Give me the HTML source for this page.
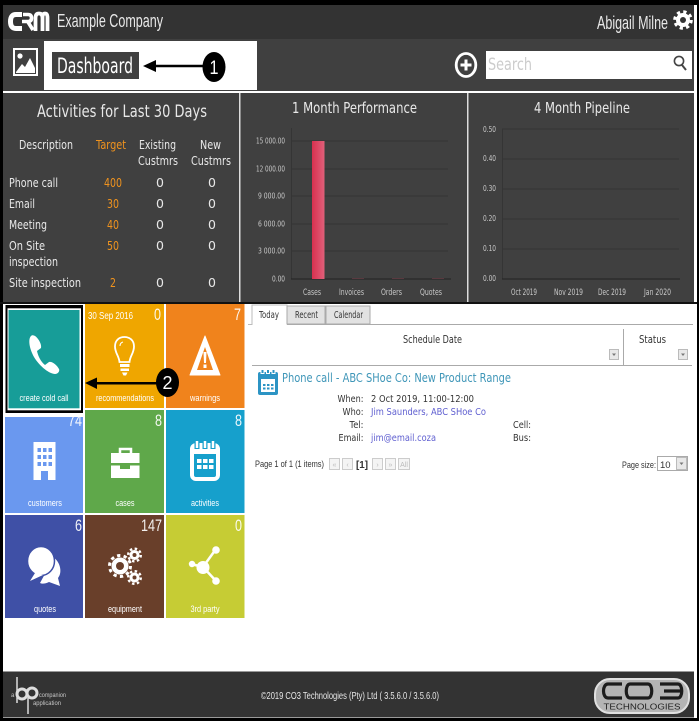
<!DOCTYPE html>
<html><head><meta charset="utf-8"><title>Dashboard</title>
<style>
html,body{margin:0;padding:0;background:#fff;width:699px;height:723px;overflow:hidden}
svg{display:block}
text{font-family:"Liberation Sans",sans-serif;fill:#fff}
.d{font-family:"DejaVu Sans",sans-serif}
.m{text-anchor:middle}
.e{text-anchor:end}
.a{fill:#e8e8e8}
.g{fill:#c8c8c8}
.o{fill:#f0931e}
.k{fill:#333}
.l{fill:#5f5fd0}
</style></head><body>
<svg width="699" height="723" viewBox="0 0 699 723" xmlns="http://www.w3.org/2000/svg">
<rect width="699" height="723" fill="#fff"/>
<!-- outer frame -->
<rect x="0" y="0" width="699" height="5" fill="#000"/>
<rect x="0" y="0" width="3" height="721" fill="#000"/>
<rect x="697" y="0" width="2" height="721" fill="#000"/>
<rect x="0" y="718" width="699" height="3" fill="#000"/>
<rect x="3" y="5" width="691" height="34" fill="#333"/>
<rect x="3" y="39" width="691" height="52" fill="#404040"/>
<rect x="3" y="93" width="691" height="209" fill="#404040"/>
<rect x="0" y="302" width="697" height="2" fill="#111"/>
<rect x="3" y="91" width="691" height="2" fill="#fff"/>
<rect x="239" y="93" width="1.5" height="209" fill="#ddd"/>
<rect x="467" y="93" width="1.5" height="209" fill="#ddd"/>

<!-- CRM logo -->
<g fill="none" stroke="#fff" stroke-linecap="butt">
<path d="M22 14.500H16Q10.500 14.500 10.500 21.500Q10.500 28.500 16 28.500H22" stroke-width="5"/>
<path d="M22 21.500H28Q31.500 21.500 31.500 18Q31.500 14.500 28 14.500H23M28 22L33 30" stroke-width="3.600"/>
<path d="M35.500 31V18Q35.500 13.500 39 13.500Q42.500 13.500 42.500 18V31M42.500 18Q42.500 13.500 45 13.500Q47.500 13.500 47.500 18V31" stroke-width="3.800"/>
</g>
<text x="57" y="27" font-size="18" class="a" textLength="106" lengthAdjust="spacingAndGlyphs">Example Company</text>
<text x="597" y="29" font-size="18" class="a" textLength="71" lengthAdjust="spacingAndGlyphs">Abigail Milne</text>
<!-- gear -->
<circle cx="683" cy="20" r="7" fill="#fff"/>
<circle cx="683" cy="20" r="8.300" fill="none" stroke="#fff" stroke-width="3" stroke-dasharray="3.260 3.260"/>
<circle cx="683" cy="20" r="3" fill="#333"/>

<!-- second row -->
<rect x="44" y="41" width="213" height="49" fill="#fff"/>
<rect x="14" y="49" width="23" height="26" fill="none" stroke="#fff" stroke-width="2"/>
<circle cx="20" cy="56" r="2.600" fill="#fff"/>
<path d="M16 72L22 64 25 67 30 58 35 68V73H16Z" fill="#fff"/>
<rect x="52" y="52" width="87" height="27" fill="#404040"/>
<text x="57" y="73" font-size="21" class="d" textLength="76" lengthAdjust="spacingAndGlyphs">Dashboard</text>
<path d="M143 66L156 60V64.800H204V67.200H156V72Z" fill="#000"/>
<ellipse cx="214" cy="67" rx="11.500" ry="15" fill="#000"/>
<text x="214" y="74" font-size="19" class="m" textLength="9" lengthAdjust="spacingAndGlyphs">1</text>
<ellipse cx="466" cy="65" rx="9.800" ry="11.500" fill="none" stroke="#fff" stroke-width="2.800"/>
<path d="M466 59.500V70.500M460.500 65H471.500" stroke="#fff" stroke-width="3"/>
<rect x="486" y="51" width="206" height="28" fill="#fff"/>
<text x="488" y="70" font-size="17" style="fill:#ccc" class="d" textLength="44" lengthAdjust="spacingAndGlyphs">Search</text>
<circle cx="679" cy="61" r="4.600" fill="none" stroke="#444" stroke-width="1.600"/>
<path d="M682 65L686 70" stroke="#444" stroke-width="2"/>

<!-- activities -->
<text x="37" y="117" font-size="17" class="d a" textLength="170" lengthAdjust="spacingAndGlyphs">Activities for Last 30 Days</text>
<g font-size="12.500">
<text x="19" y="149" class="d a" textLength="54" lengthAdjust="spacingAndGlyphs">Description</text>
<text x="96" y="149" class="d o" textLength="30" lengthAdjust="spacingAndGlyphs">Target</text>
<text x="139" y="149" class="d a" textLength="37" lengthAdjust="spacingAndGlyphs">Existing</text>
<text x="138" y="165" class="d a" textLength="40" lengthAdjust="spacingAndGlyphs">Custmrs</text>
<text x="200" y="149" class="d a" textLength="21" lengthAdjust="spacingAndGlyphs">New</text>
<text x="191" y="165" class="d a" textLength="40" lengthAdjust="spacingAndGlyphs">Custmrs</text>
<text x="9" y="187" class="d a" textLength="49" lengthAdjust="spacingAndGlyphs">Phone call</text>
<text x="9" y="208" class="d a" textLength="26" lengthAdjust="spacingAndGlyphs">Email</text>
<text x="9" y="229" class="d a" textLength="38" lengthAdjust="spacingAndGlyphs">Meeting</text>
<text x="9" y="250" class="d a" textLength="36" lengthAdjust="spacingAndGlyphs">On Site</text>
<text x="9" y="266" class="d a" textLength="49" lengthAdjust="spacingAndGlyphs">inspection</text>
<text x="9" y="287" class="d a" textLength="72" lengthAdjust="spacingAndGlyphs">Site inspection</text>
<text x="104" y="187" class="d o" textLength="18" lengthAdjust="spacingAndGlyphs">400</text>
<text x="107" y="208" class="d o" textLength="12" lengthAdjust="spacingAndGlyphs">30</text>
<text x="107" y="229" class="d o" textLength="12" lengthAdjust="spacingAndGlyphs">40</text>
<text x="107" y="250" class="d o" textLength="12" lengthAdjust="spacingAndGlyphs">50</text>
<text x="110" y="287" class="d o" textLength="6" lengthAdjust="spacingAndGlyphs">2</text>
<text x="160" y="187" class="d a m">0</text><text x="160" y="208" class="d a m">0</text><text x="160" y="229" class="d a m">0</text><text x="160" y="250" class="d a m">0</text><text x="160" y="287" class="d a m">0</text>
<text x="212" y="187" class="d a m">0</text><text x="212" y="208" class="d a m">0</text><text x="212" y="229" class="d a m">0</text><text x="212" y="250" class="d a m">0</text><text x="212" y="287" class="d a m">0</text>
</g>

<!-- chart 1 -->
<text x="292" y="113" font-size="15" class="d a" textLength="125" lengthAdjust="spacingAndGlyphs">1 Month Performance</text>
<g stroke="#353535" stroke-width="1">
<path d="M291.500 128V279M291 141H448M291 169H448M291 196H448M291 224H448M291 251H448"/>
<path d="M291 279H451" stroke="#222"/>
</g>
<defs><linearGradient id="b" x1="0" x2="1" y1="0" y2="0"><stop offset="0" stop-color="#d9304f"/><stop offset="1" stop-color="#e0607a"/></linearGradient></defs>
<rect x="312" y="141" width="12.500" height="138" fill="url(#b)"/>
<rect x="352" y="278" width="12" height="1" fill="#5a3a40"/><rect x="392" y="278" width="12" height="1" fill="#5a3a40"/><rect x="432" y="278" width="12" height="1" fill="#5a3a40"/>
<g font-size="7.500">
<text x="285" y="143.500" class="e d g" textLength="29" lengthAdjust="spacingAndGlyphs">15 000.00</text>
<text x="285" y="171.500" class="e d g" textLength="29" lengthAdjust="spacingAndGlyphs">12 000.00</text>
<text x="285" y="198.500" class="e d g" textLength="27" lengthAdjust="spacingAndGlyphs">9 000.00</text>
<text x="285" y="226.500" class="e d g" textLength="27" lengthAdjust="spacingAndGlyphs">6 000.00</text>
<text x="285" y="253.500" class="e d g" textLength="27" lengthAdjust="spacingAndGlyphs">3 000.00</text>
<text x="285" y="281.500" class="e d g" textLength="13" lengthAdjust="spacingAndGlyphs">0.00</text>
</g>
<g font-size="8.500">
<text x="303" y="295" class="d g" textLength="18" lengthAdjust="spacingAndGlyphs">Cases</text>
<text x="339" y="295" class="d g" textLength="25" lengthAdjust="spacingAndGlyphs">Invoices</text>
<text x="381" y="295" class="d g" textLength="21" lengthAdjust="spacingAndGlyphs">Orders</text>
<text x="420" y="295" class="d g" textLength="22" lengthAdjust="spacingAndGlyphs">Quotes</text>
</g>

<!-- chart 2 -->
<text x="534" y="113" font-size="15" class="d a" textLength="96" lengthAdjust="spacingAndGlyphs">4 Month Pipeline</text>
<g stroke="#353535" stroke-width="1">
<path d="M502.500 129V279M502 129H679M502 159H679M502 189H679M502 219H679M502 249H679"/>
<path d="M502 279H680" stroke="#222"/>
</g>
<g font-size="7.500">
<text x="496" y="132" class="e d g" textLength="13" lengthAdjust="spacingAndGlyphs">0.50</text>
<text x="496" y="161" class="e d g" textLength="13" lengthAdjust="spacingAndGlyphs">0.40</text>
<text x="496" y="191" class="e d g" textLength="13" lengthAdjust="spacingAndGlyphs">0.30</text>
<text x="496" y="221" class="e d g" textLength="13" lengthAdjust="spacingAndGlyphs">0.20</text>
<text x="496" y="251" class="e d g" textLength="13" lengthAdjust="spacingAndGlyphs">0.10</text>
<text x="496" y="281" class="e d g" textLength="13" lengthAdjust="spacingAndGlyphs">0.00</text>
</g>
<g font-size="8.500">
<text x="511" y="295" class="d g" textLength="26" lengthAdjust="spacingAndGlyphs">Oct 2019</text>
<text x="554" y="295" class="d g" textLength="29" lengthAdjust="spacingAndGlyphs">Nov 2019</text>
<text x="598" y="295" class="d g" textLength="28" lengthAdjust="spacingAndGlyphs">Dec 2019</text>
<text x="644" y="295" class="d g" textLength="27" lengthAdjust="spacingAndGlyphs">Jan 2020</text>
</g>

<!-- tiles -->
<rect x="85" y="304" width="79" height="104" fill="#efa600"/>
<rect x="166" y="304" width="78.500" height="104" fill="#f0831c"/>
<rect x="5" y="410" width="78" height="103" fill="#6a98ef"/>
<rect x="85" y="410" width="79" height="103" fill="#5fa84a"/>
<rect x="166" y="410" width="78.500" height="103" fill="#16a0cc"/>
<rect x="5" y="515" width="78" height="103" fill="#3f50a6"/>
<rect x="85" y="515" width="79" height="103" fill="#693f2a"/>
<rect x="166" y="515" width="78.500" height="103" fill="#c6cc34"/>
<rect x="4" y="304" width="80" height="113" fill="#fff"/>
<rect x="5.500" y="305" width="77.500" height="108" fill="#000"/>
<rect x="7.500" y="308.300" width="73.500" height="102" fill="#fff"/>
<rect x="8.500" y="310" width="71" height="98.300" fill="#179d98"/>

<!-- tile text -->
<g font-size="9.500" class="m">
<text x="44" y="401" class="m" textLength="49" lengthAdjust="spacingAndGlyphs">create cold call</text>
<text x="125" y="401" class="m" textLength="58" lengthAdjust="spacingAndGlyphs">recommendations</text>
<text x="205" y="401" class="m" textLength="30" lengthAdjust="spacingAndGlyphs">warnings</text>
<text x="45" y="506" class="m" textLength="34" lengthAdjust="spacingAndGlyphs">customers</text>
<text x="125" y="506" class="m" textLength="19" lengthAdjust="spacingAndGlyphs">cases</text>
<text x="205" y="506" class="m" textLength="28" lengthAdjust="spacingAndGlyphs">activities</text>
<text x="45" y="612" class="m" textLength="22" lengthAdjust="spacingAndGlyphs">quotes</text>
<text x="125" y="612" class="m" textLength="34" lengthAdjust="spacingAndGlyphs">equipment</text>
<text x="205" y="612" class="m" textLength="29" lengthAdjust="spacingAndGlyphs">3rd party</text>
</g>
<text x="88" y="319" font-size="10.500" textLength="45" lengthAdjust="spacingAndGlyphs">30 Sep 2016</text>
<g font-size="17" opacity=".92">
<text x="161" y="320" class="e" textLength="7" lengthAdjust="spacingAndGlyphs">0</text>
<text x="241" y="320" class="e" textLength="7" lengthAdjust="spacingAndGlyphs">7</text>
<text x="82" y="426" class="e" textLength="14" lengthAdjust="spacingAndGlyphs">74</text>
<text x="162" y="426" class="e" textLength="7" lengthAdjust="spacingAndGlyphs">8</text>
<text x="242" y="426" class="e" textLength="7" lengthAdjust="spacingAndGlyphs">8</text>
<text x="82" y="531" class="e" textLength="7" lengthAdjust="spacingAndGlyphs">6</text>
<text x="162" y="531" class="e" textLength="21" lengthAdjust="spacingAndGlyphs">147</text>
<text x="242" y="531" class="e" textLength="7" lengthAdjust="spacingAndGlyphs">0</text>
</g>

<!-- icons -->
<path d="M31 336C28 339 29 348 34 357 40 367 50 374 55 374 58 374 60 371 59 369 57 365 52 361 49 362L45 365C41 362 38 356 37 351L41 348C42 344 38 338 35 336 33 335 32 335 31 336Z" fill="#fff"/>
<g fill="none" stroke="#fff" stroke-width="1.800">
<path d="M119.500 362C119 356 115 353 115 346.500 115 340 119.500 337 124.500 337S134 340 134 346.500C134 353 130 356 129.500 362Z"/>
<path d="M123 342C121 342.500 120 344 120 346" stroke-width="1"/>
</g>
<path d="M120 364H129.500V367H120ZM120.500 368.500H129V371H120.500ZM122 372.500H127.500L126 375.500H123.500Z" fill="#fff"/>
<path d="M205 336L220 375H190Z" fill="#fff" stroke="#fff" stroke-linejoin="round"/>
<path d="M205 347L213 370H197Z" fill="#f0831c"/>
<path d="M203.500 352H206.500L206 363H204Z" fill="#fff"/><rect x="203.500" y="364.500" width="3" height="3.500" fill="#fff"/>
<!-- building -->
<path d="M33.500 442H55.500V480H48V471H41V480H33.500Z" fill="#fff"/>
<g fill="#6a98ef"><rect x="37.500" y="448" width="3.500" height="4"/><rect x="43" y="448" width="3.500" height="4"/><rect x="48.500" y="448" width="3.500" height="4"/><rect x="37.500" y="455" width="3.500" height="4"/><rect x="43" y="455" width="3.500" height="4"/><rect x="48.500" y="455" width="3.500" height="4"/><rect x="37.500" y="462" width="3.500" height="4"/><rect x="43" y="462" width="3.500" height="4"/><rect x="48.500" y="462" width="3.500" height="4"/></g>
<!-- briefcase -->
<path d="M120 453V449H131V453" fill="none" stroke="#fff" stroke-width="2.500"/>
<path d="M111 453H139.500V463H111Z" fill="#fff"/>
<path d="M111 465.500H120V469H130V465.500H139.500V478H111Z" fill="#fff"/>
<!-- calendar -->
<rect x="192" y="445" width="26" height="34" rx="4" fill="none" stroke="#fff" stroke-width="4"/>
<rect x="192" y="445" width="26" height="9" fill="#fff"/>
<path d="M197 442V449M205 442V449M213 442V449" stroke="#16a0cc" stroke-width="5"/>
<path d="M197 441V448M205 441V448M213 441V448" stroke="#fff" stroke-width="2.500"/>
<g fill="#fff"><rect x="197" y="459" width="4.500" height="4"/><rect x="203" y="459" width="4.500" height="4"/><rect x="209" y="459" width="4.500" height="4"/><rect x="197" y="465" width="4.500" height="4"/><rect x="203" y="465" width="4.500" height="4"/><rect x="209" y="465" width="4.500" height="4"/></g>
<!-- quotes -->
<path d="M51 556C60 560 63 572 58 578L60 586 49 582C45 584 42 584 40 583L46 572Z" fill="#fff"/>
<ellipse cx="41" cy="561" rx="13.500" ry="14.500" fill="#fff" stroke="#3f50a6" stroke-width="1.500"/>
<path d="M35 573L30 581 43 575Z" fill="#fff"/>
<!-- gears -->
<g fill="#fff" stroke="none">
<circle cx="120" cy="566" r="8.500"/>
<circle cx="120" cy="566" r="10.500" fill="none" stroke="#fff" stroke-width="3" stroke-dasharray="3.300 3.300"/>
<circle cx="134.500" cy="555" r="5"/>
<circle cx="134.500" cy="555" r="6.300" fill="none" stroke="#fff" stroke-width="2.400" stroke-dasharray="2.470 2.470"/>
<circle cx="134.500" cy="577.500" r="5"/>
<circle cx="134.500" cy="577.500" r="6.300" fill="none" stroke="#fff" stroke-width="2.400" stroke-dasharray="2.470 2.470"/>
</g>
<circle cx="120" cy="566" r="4" fill="#693f2a"/><circle cx="134.500" cy="555" r="2" fill="#693f2a"/><circle cx="134.500" cy="577.500" r="2" fill="#693f2a"/>
<!-- share -->
<path d="M203 567L216 549M203 567L216 581M203 567L191 564" stroke="#fff" stroke-width="2.500"/>
<circle cx="203" cy="567.500" r="6.500" fill="#fff"/><circle cx="216" cy="550" r="3.800" fill="#fff"/><circle cx="216" cy="581" r="3.800" fill="#fff"/><circle cx="192" cy="564" r="3.200" fill="#fff"/>

<!-- annotation 2 -->
<path d="M85 383L97 377.500V382H158V384.500H97V389Z" fill="#000"/>
<ellipse cx="167.500" cy="382.500" rx="11.500" ry="14.500" fill="#000"/>
<text x="167.500" y="389" font-size="18" class="m" textLength="10" lengthAdjust="spacingAndGlyphs">2</text>

<!-- tabs -->
<path d="M248 324.500H252V305H287V324.500" fill="#fff" stroke="#bbb"/>
<rect x="287" y="306" width="38" height="18" fill="#e2e2e2" stroke="#aaa"/>
<rect x="326" y="306" width="44" height="18" fill="#e2e2e2" stroke="#aaa"/>
<path d="M287 324.500H693" stroke="#aaa"/>
<text x="259" y="318" font-size="9.500" class="d k" textLength="20" lengthAdjust="spacingAndGlyphs">Today</text>
<text x="295" y="318" font-size="9.500" class="d k" textLength="23" lengthAdjust="spacingAndGlyphs">Recent</text>
<text x="334" y="318" font-size="9.500" class="d k" textLength="29" lengthAdjust="spacingAndGlyphs">Calendar</text>
<path d="M252 365.500H692" stroke="#aaa"/>
<path d="M623.500 329V365" stroke="#aaa"/>
<text x="403" y="343" font-size="11" class="d k" textLength="59" lengthAdjust="spacingAndGlyphs">Schedule Date</text>
<text x="639" y="343" font-size="11" class="d k" textLength="27" lengthAdjust="spacingAndGlyphs">Status</text>
<rect x="609.500" y="349.500" width="9" height="10" fill="#e8e8e8" stroke="#bbb"/>
<rect x="678.500" y="349.500" width="9" height="10" fill="#e8e8e8" stroke="#bbb"/>
<path d="M612 353.500h4l-2 2.500zM681 353.500h4l-2 2.500z" fill="#777"/>
<!-- list icon -->
<rect x="258" y="372" width="20" height="23" rx="2" fill="#2c94c4"/>
<rect x="261" y="379" width="14" height="13" fill="#fff"/>
<path d="M262.500 369V374M268 369V374M273.500 369V374" stroke="#fff" stroke-width="4"/>
<path d="M262.500 370V373M268 370V373M273.500 370V373" stroke="#2c94c4" stroke-width="2"/>
<g fill="#2c94c4"><rect x="263" y="384" width="2.500" height="2"/><rect x="267" y="384" width="2.500" height="2"/><rect x="271" y="384" width="2.500" height="2"/><rect x="263" y="387.500" width="2.500" height="2"/><rect x="267" y="387.500" width="2.500" height="2"/><rect x="271" y="387.500" width="2.500" height="2"/></g>
<text x="282" y="382" font-size="12" class="d" style="fill:#3f96b8" textLength="229" lengthAdjust="spacingAndGlyphs">Phone call - ABC SHoe Co: New Product Range</text>
<g font-size="10">
<text x="363.500" y="402" class="e d k" textLength="26" lengthAdjust="spacingAndGlyphs">When:</text>
<text x="363.500" y="415" class="e d k" textLength="21" lengthAdjust="spacingAndGlyphs">Who:</text>
<text x="363.500" y="428" class="e d k" textLength="14" lengthAdjust="spacingAndGlyphs">Tel:</text>
<text x="363.500" y="441" class="e d k" textLength="25" lengthAdjust="spacingAndGlyphs">Email:</text>
<text x="371" y="402" class="d k" textLength="103" lengthAdjust="spacingAndGlyphs">2 Oct 2019, 11:00-12:00</text>
<text x="371" y="415" class="d l" textLength="115" lengthAdjust="spacingAndGlyphs">Jim Saunders, ABC SHoe Co</text>
<text x="371" y="441" class="d l" textLength="65" lengthAdjust="spacingAndGlyphs">jim@email.coza</text>
<text x="513" y="428" class="d k" textLength="18" lengthAdjust="spacingAndGlyphs">Cell:</text>
<text x="513" y="441" class="d k" textLength="18" lengthAdjust="spacingAndGlyphs">Bus:</text>
</g>
<text x="255" y="467" font-size="9.500" class="k" textLength="69" lengthAdjust="spacingAndGlyphs">Page 1 of 1 (1 items)</text>
<g fill="#f4f4f4" stroke="#ccc"><rect x="329.500" y="458.500" width="10" height="11"/><rect x="342.500" y="458.500" width="10" height="11"/><rect x="372.500" y="458.500" width="10" height="11"/><rect x="385.500" y="458.500" width="10" height="11"/><rect x="398.500" y="458.500" width="11" height="11"/></g>
<g font-size="7" style="text-anchor:middle">
<text x="334.500" y="467" class="m" style="fill:#bbb">«</text><text x="347.500" y="467" class="m" style="fill:#bbb">‹</text><text x="377.500" y="467" class="m" style="fill:#bbb">›</text><text x="390.500" y="467" class="m" style="fill:#bbb">»</text><text x="404" y="467" class="m" style="fill:#bbb">All</text>
</g>
<text x="356" y="468" font-size="10" font-weight="bold" class="k" textLength="12" lengthAdjust="spacingAndGlyphs">[1]</text>
<text x="622" y="468" font-size="9.500" class="k" textLength="34" lengthAdjust="spacingAndGlyphs">Page size:</text>
<rect x="657.500" y="456.500" width="30" height="14" fill="#fff" stroke="#aaa"/>
<rect x="676.500" y="457.500" width="10" height="12" fill="#e8e8e8" stroke="#bbb"/>
<path d="M679.500 462.500h4l-2 2.500z" fill="#777"/>
<text x="660" y="468" font-size="9.500" class="k">10</text>

<!-- footer -->
<rect x="3" y="671.500" width="691" height="46" fill="#333"/>
<text x="261" y="699" font-size="10.500" class="a" textLength="178" lengthAdjust="spacingAndGlyphs">©2019 CO3 Technologies (Pty) Ltd ( 3.5.6.0 / 3.5.6.0)</text>
<!-- bp logo -->
<g fill="none" stroke="#ddd">
<path d="M17 677V703" stroke-width="1.500"/>
<circle cx="22" cy="694" r="5" stroke-width="3"/>
<path d="M28 698V714" stroke-width="1.500"/>
<circle cx="32" cy="693" r="5" stroke-width="3"/>
</g>
<text x="11" y="697" font-size="6" class="g">a</text>
<text x="39" y="697" font-size="6" class="g" textLength="27" lengthAdjust="spacingAndGlyphs">companion</text>
<text x="33" y="705" font-size="6" class="g" textLength="28" lengthAdjust="spacingAndGlyphs">application</text>
<!-- CO3 logo -->
<rect x="595" y="679" width="94" height="34" rx="15" fill="#b4b4b4" stroke="#e0e0e0" stroke-width="2"/>
<path d="M622 684H608C602 684 602 698 608 698H622M630 684H648C653 684 653 698 648 698H630C625 698 625 684 630 684ZM660 684H678C683 684 683 698 678 698H660M664 691H681" fill="none" stroke="#1c1c1c" stroke-width="3.200"/>
<text x="642" y="709.500" font-size="8" class="m" style="fill:#222" textLength="77" lengthAdjust="spacingAndGlyphs">TECHNOLOGIES</text>
</svg>
</body></html>
